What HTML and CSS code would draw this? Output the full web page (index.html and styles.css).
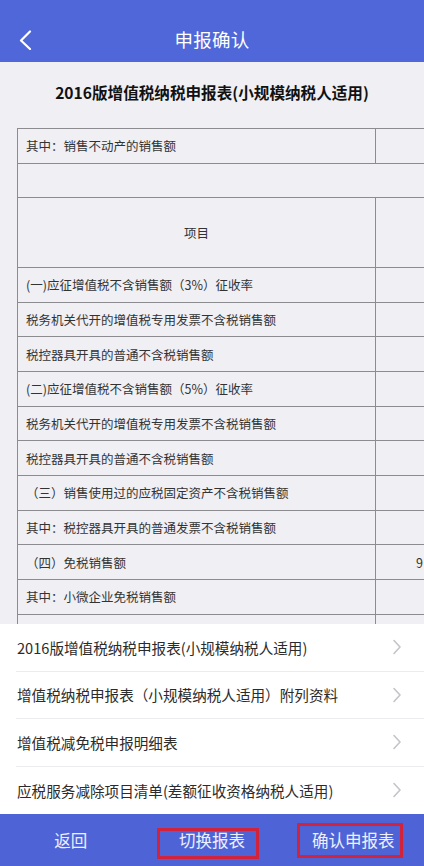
FILE: index.html
```html
<!DOCTYPE html>
<html lang="zh-CN">
<head>
<meta charset="utf-8">
<title>申报确认</title>
<link rel="stylesheet" href="styles.css">
</head>
<body>
<header class="topbar">
  <div class="navbar">
    <span class="back">
      <svg width="14" height="22" viewBox="0 0 14 22"><polyline points="11,3.5 2,12.5 11,21" fill="none" stroke="#ffffff" stroke-width="2.2" stroke-linecap="round" stroke-linejoin="round"/></svg>
    </span>
    <span class="nav-title">申报确认</span>
    <span></span>
  </div>
</header>
<main class="content">
  <h1 class="sheet-title">2016版增值税纳税申报表(小规模纳税人适用)</h1>
  <div class="sheet">
    <div class="row"><div class="c1">其中：销售不动产的销售额</div><div class="c2"></div></div>
    <div class="row row-empty"><div class="c-full"></div></div>
    <div class="row row-tall"><div class="c1 center">项目</div><div class="c2"></div></div>
    <div class="row"><div class="c1">(一)应征增值税不含销售额（3%）征收率</div><div class="c2"></div></div>
    <div class="row"><div class="c1">税务机关代开的增值税专用发票不含税销售额</div><div class="c2"></div></div>
    <div class="row"><div class="c1">税控器具开具的普通不含税销售额</div><div class="c2"></div></div>
    <div class="row"><div class="c1">(二)应征增值税不含销售额（5%）征收率</div><div class="c2"></div></div>
    <div class="row"><div class="c1">税务机关代开的增值税专用发票不含税销售额</div><div class="c2"></div></div>
    <div class="row"><div class="c1">税控器具开具的普通不含税销售额</div><div class="c2"></div></div>
    <div class="row"><div class="c1">（三）销售使用过的应税固定资产不含税销售额</div><div class="c2"></div></div>
    <div class="row"><div class="c1">其中：税控器具开具的普通发票不含税销售额</div><div class="c2"></div></div>
    <div class="row"><div class="c1">（四）免税销售额</div><div class="c2 value">9</div></div>
    <div class="row"><div class="c1">其中：小微企业免税销售额</div><div class="c2"></div></div>
    <div class="row"><div class="c1"></div><div class="c2"></div></div>
  </div>
</main>
<nav class="sheet-list">
  <div class="item"><span>2016版增值税纳税申报表(小规模纳税人适用)</span><svg class="arrow" width="10" height="16" viewBox="0 0 10 16"><polyline points="2,1.5 8,8 2,14.5" fill="none" stroke="#c4c4c9" stroke-width="1.6" stroke-linecap="round" stroke-linejoin="round"/></svg></div>
  <div class="item"><span>增值税纳税申报表（小规模纳税人适用）附列资料</span><svg class="arrow" width="10" height="16" viewBox="0 0 10 16"><polyline points="2,1.5 8,8 2,14.5" fill="none" stroke="#c4c4c9" stroke-width="1.6" stroke-linecap="round" stroke-linejoin="round"/></svg></div>
  <div class="item"><span>增值税减免税申报明细表</span><svg class="arrow" width="10" height="16" viewBox="0 0 10 16"><polyline points="2,1.5 8,8 2,14.5" fill="none" stroke="#c4c4c9" stroke-width="1.6" stroke-linecap="round" stroke-linejoin="round"/></svg></div>
  <div class="item"><span>应税服务减除项目清单(差额征收资格纳税人适用)</span><svg class="arrow" width="10" height="16" viewBox="0 0 10 16"><polyline points="2,1.5 8,8 2,14.5" fill="none" stroke="#c4c4c9" stroke-width="1.6" stroke-linecap="round" stroke-linejoin="round"/></svg></div>
</nav>
<footer class="actions">
  <span class="act">返回</span>
  <span class="act">切换报表</span>
  <span class="act">确认申报表</span>
  <span class="mark mark-1"></span>
  <span class="mark mark-2"></span>
</footer>
</body>
</html>
```

FILE: styles.css
```css
* { box-sizing: border-box; }
html, body { margin: 0; padding: 0; }
body {
  width: 424px;
  height: 866px;
  overflow: hidden;
  display: flex;
  flex-direction: column;
  font-family: "Noto Sans CJK SC", "Noto Sans", "Liberation Sans", sans-serif;
  background: #efeff4;
  color: #333;
}
.topbar {
  height: 62px;
  flex: none;
  background: #4f67d8;
  padding-top: 16px;
}
.navbar {
  height: 46px;
  display: grid;
  grid-template-columns: 1fr auto 1fr;
  align-items: center;
}
.back { padding-left: 19px; display: flex; align-items: center; }
.nav-title {
  color: #fff;
  font-size: 18.5px;
  letter-spacing: 0.3px;
}
.content {
  flex: 1;
  overflow: hidden;
  background: #efeff4;
}
.sheet-title {
  margin: 0;
  padding: 20px 0 26px;
  line-height: 20px;
  font-size: 15.6px;
  font-weight: 700;
  text-align: center;
  color: #111;
}
.sheet {
  margin-left: 17px;
  width: 520px;
  border-top: 1px solid #8c8c90;
  border-left: 1px solid #8c8c90;
}
.row {
  display: flex;
  height: 34.71px;
  border-bottom: 1px solid #8c8c90;
}
.row-tall { height: 69.42px; }
.c1 {
  width: 358px;
  flex: none;
  border-right: 1px solid #8c8c90;
  display: flex;
  align-items: center;
  padding-left: 8px;
  font-size: 12.5px;
  color: #333;
  white-space: nowrap;
}
.c1.center { justify-content: center; padding-left: 0; }
.c2 {
  flex: 1;
  display: flex;
  align-items: center;
  font-size: 12.5px;
  color: #333;
}
.c2.value { padding-left: 40px; }
.c-full { flex: 1; }
.sheet-list {
  height: 190px;
  flex: none;
  background: #fff;
  padding-left: 16px;
}
.item {
  height: 47.5px;
  display: flex;
  align-items: center;
  justify-content: space-between;
  padding-right: 22px;
  border-bottom: 1px solid #ececef;
  font-size: 14.6px;
  color: #2b2b2b;
  padding-left: 1px;
}
.item:last-child { border-bottom: none; }
.arrow { flex: none; }
.actions {
  position: relative;
  height: 52px;
  flex: none;
  background: #4e64d6;
  display: grid;
  grid-template-columns: repeat(3, 1fr);
  align-items: center;
}
.act {
  text-align: center;
  color: #eef0ff;
  font-size: 16.5px;
}
.mark {
  position: absolute;
  border: 3px solid #d2233d;
}
.mark-1 { left: 157px; top: 14px; width: 102px; height: 31px; }
.mark-2 { left: 297px; top: 9px; width: 106px; height: 35px; }
```
